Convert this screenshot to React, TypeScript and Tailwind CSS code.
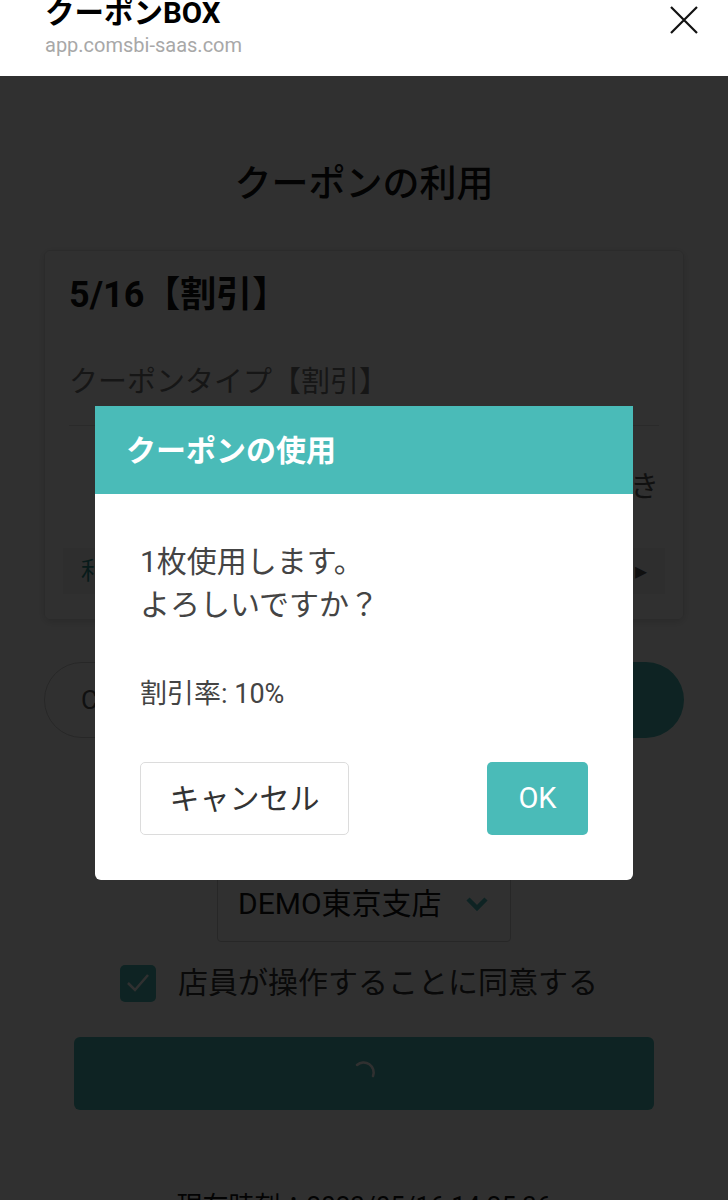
import React from "react";

const FONT = { fontFamily: "Roboto, 'Noto Sans CJK JP', sans-serif" };

export default function App() {
  return (
    <div className="relative w-[728px] h-[1200px] overflow-hidden bg-white" style={FONT}>
      {/* Custom tab header */}
      <div className="relative h-[76px] bg-white px-[45px]">
        <div className="mt-[-5px] text-[29.5px] leading-[36px] font-bold text-black">クーポンBOX</div>
        <div className="mt-[2px] text-[20px] leading-[24px] text-[#a8a8a8]">app.comsbi-saas.com</div>
        <svg className="absolute right-[29px] top-[10px]" width="30" height="30" viewBox="0 0 30 30">
          <path d="M2 2 L28 28 M28 2 L2 28" stroke="#111" strokeWidth="2.2" />
        </svg>
      </div>

      {/* Page content */}
      <div className="relative">
        <div className="flex flex-col items-center">
          <div className="mt-[92px] text-[37px] leading-[44px] font-medium text-[#111]">クーポンの利用</div>
        </div>

        <div className="mx-[44px] mt-[43px] h-[370px] rounded-[6px] border border-[#e2e2e2] shadow-[0_2px_8px_rgba(0,0,0,0.15)] px-[24px] pt-[24px]">
          <div className="text-[36px] leading-[40px] font-bold text-[#111]">5/16【割引】</div>
          <div className="mt-[49px] text-[29px] leading-[36px] text-[#777]">クーポンタイプ【割引】</div>
          <div className="mt-[25px] h-px bg-[#ddd]" />
          <div className="mt-[43px] text-right text-[29px] leading-[36px] text-[#555]">1会計につき</div>
          <div className="mt-[43px] mx-[-6px] h-[46px] bg-[#f3f3f3] flex items-center justify-between px-[18px] text-[24px] text-[#2a8f8b]">
            <span>利用規約</span>
            <span className="text-[#555]">店舗で利用 ▸</span>
          </div>
        </div>

        <div className="mx-[44px] mt-[42px] flex gap-[14px]">
          <div className="flex-1 h-[76px] rounded-full border border-[#ccc] flex items-center px-[36px] text-[26px] text-[#555]">CLOSE</div>
          <div className="flex-1 h-[76px] rounded-full bg-[#4abbb8] flex items-center justify-center text-[26px] text-white">使用する</div>
        </div>

        <div className="flex justify-center mt-[118px]">
          <div className="w-[294px] h-[86px] border border-[#ccc] rounded-[4px] flex items-center pt-[10px] pl-[20px] gap-[22px]">
            <span className="text-[30px] leading-[40px] text-[#111]">DEMO東京支店</span>
            <svg width="26" height="18" viewBox="0 0 26 18">
              <path d="M4 4 L13 13 L22 4" stroke="#4abbb8" strokeWidth="4.5" fill="none" />
            </svg>
          </div>
        </div>

        <div className="flex items-center ml-[120px] mt-[21px] gap-[22px]">
          <div className="w-[36px] h-[37px] rounded-[5px] bg-[#4abbb8] flex items-center justify-center">
            <svg width="26" height="22" viewBox="0 0 26 22">
              <path d="M3 11 L10 18 L23 3" stroke="#fff" strokeWidth="2.5" fill="none" />
            </svg>
          </div>
          <span className="text-[30px] leading-[40px] text-[#333]">店員が操作することに同意する</span>
        </div>

        <div className="mx-[74px] mt-[34px] h-[73px] rounded-[6px] bg-[#4abbb8] flex items-center justify-center">
          <svg width="30" height="30" viewBox="0 0 30 30">
            <path d="M8 6 A10 10 0 0 1 24 17" stroke="#fff" strokeWidth="2.5" fill="none" strokeLinecap="round" />
          </svg>
        </div>

        <div className="mt-[78px] text-center text-[26px] leading-[36px] text-[#111]">現在時刻：2023/05/16 14:25:36</div>
      </div>

      {/* Overlay */}
      <div className="absolute left-0 right-0 top-[76px] bottom-0 bg-[rgba(0,0,0,0.81)]" />

      {/* Modal */}
      <div className="absolute left-[95px] top-[406px] w-[538px] bg-white rounded-b-[6px] overflow-hidden">
        <div className="h-[88px] bg-[#4abbb8] flex items-center pl-[31px]">
          <span className="text-[30px] font-bold text-white">クーポンの使用</span>
        </div>
        <div className="px-[45px] pt-[46px] pb-[45px]">
          <div className="text-[30px] leading-[43px] text-[#444]">1枚使用します。</div>
          <div className="text-[30px] leading-[43px] text-[#444]">よろしいですか？</div>
          <div className="mt-[48px] text-[27px] leading-[40px] text-[#444]">割引率: 10%</div>
          <div className="mt-[48px] flex justify-between">
            <div className="w-[209px] h-[73px] border border-[#dcdcdc] rounded-[5px] flex items-center justify-center text-[30px] text-[#333]">キャンセル</div>
            <div className="w-[101px] h-[73px] bg-[#4abbb8] rounded-[5px] flex items-center justify-center text-[29px] text-white">OK</div>
          </div>
        </div>
      </div>
    </div>
  );
}
